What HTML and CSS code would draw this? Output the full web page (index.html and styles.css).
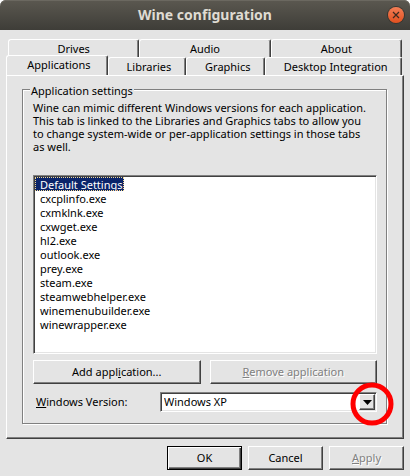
FILE: index.html
```html
<!doctype html>
<html lang="en">
  <head>
    <meta charset="utf-8">
    <title>Wine configuration</title>
    <link rel="stylesheet" href="styles.css">
  </head>
  <body>
    <header class="titlebar">
      <h1>Wine configuration</h1>
      <button class="close" type="button" aria-label="Close">
        <svg viewBox="0 0 16 16" width="16" height="16">
          <path d="M5 5l6 6M11 5l-6 6" stroke="#3c2a20" stroke-width="1.2" fill="none"/>
        </svg>
      </button>
    </header>

    <form class="dialog">
      <div class="tabs" role="tablist">
        <div class="tab-row back">
          <button class="tab" type="button" role="tab">Drives</button>
          <button class="tab" type="button" role="tab">Audio</button>
          <button class="tab" type="button" role="tab">About</button>
        </div>
        <div class="tab-row front">
          <button class="tab active" type="button" role="tab" aria-selected="true">Applications</button>
          <button class="tab libraries" type="button" role="tab">Libraries</button>
          <button class="tab graphics" type="button" role="tab">Graphics</button>
          <button class="tab desktop" type="button" role="tab">Desktop Integration</button>
        </div>
      </div>

      <div class="panel" role="tabpanel">
        <fieldset class="group">
          <legend>Application settings</legend>
          <p>Wine can mimic different Windows versions for each application. This tab is linked to the Libraries and Graphics tabs to allow you to change system-wide or per-application settings in those tabs as&nbsp;well.</p>

          <select class="app-list" size="12" aria-label="Applications">
            <option selected>Default Settings</option>
            <option>cxcplinfo.exe</option>
            <option>cxmklnk.exe</option>
            <option>cxwget.exe</option>
            <option>hl2.exe</option>
            <option>outlook.exe</option>
            <option>prey.exe</option>
            <option>steam.exe</option>
            <option>steamwebhelper.exe</option>
            <option>winemenubuilder.exe</option>
            <option>winewrapper.exe</option>
          </select>

          <div class="app-actions">
            <button class="btn" type="button">Add appl<u>i</u>cation...</button>
            <button class="btn" type="button" disabled><u>R</u>emove application</button>
          </div>

          <div class="version">
            <label for="version"><u>W</u>indows Version:</label>
            <div class="combo">
              <select id="version">
                <option>Windows XP</option>
              </select>
              <span class="arrow">
                <svg viewBox="0 0 9 5" width="9" height="5"><path d="M0 0h9L4.500 5z"/></svg>
              </span>
              <svg class="marker" viewBox="0 0 44 44" width="44" height="44">
                <circle cx="22" cy="22" r="19" fill="none" stroke="#f00" stroke-width="5"/>
              </svg>
            </div>
          </div>
        </fieldset>
      </div>

      <div class="footer">
        <button class="btn default" type="button">OK</button>
        <button class="btn" type="button">Cancel</button>
        <button class="btn" type="button" disabled><u>A</u>pply</button>
      </div>
    </form>
  </body>
</html>
```
FILE: styles.css
```css
* {
  box-sizing: border-box;
}
body {
  margin: 0;
  background: #e4e4e4;
  color: #000;
  font: 11px/14px "Noto Sans", sans-serif;
}
button,
select {
  font: inherit;
  color: inherit;
}
.titlebar {
  position: relative;
  display: flex;
  align-items: center;
  justify-content: center;
  height: 30px;
  border-radius: 6px 6px 0 0;
  background: linear-gradient(#5b5850, #3e3d38);
  box-shadow: inset 0 1px #6b6860;
}
.titlebar::before {
  content: "";
  position: absolute;
  z-index: -1;
  inset: 0;
  background: #fff;
}
.titlebar h1 {
  margin: 0;
  font: bold 14px/20px "Noto Sans", sans-serif;
  color: #dfdbd2;
}
.close {
  position: absolute;
  right: 6px;
  top: 7px;
  width: 16px;
  height: 16px;
  padding: 0;
  border: 0;
  border-radius: 50%;
  background: linear-gradient(#f37e56, #e2501f);
  box-shadow: 0 0 0 1px #38352f;
}
.close svg {
  display: block;
}
.dialog {
  padding: 9px 6px 6px;
}

/* tabs */
.tab-row {
  display: flex;
}
.tab {
  height: 18px;
  padding: 0;
  border: 1px solid #fff;
  border-right-color: #404040;
  border-bottom: 0;
  border-radius: 3px 2px 0 0;
  background: #e4e4e4;
  box-shadow: inset -1px 0 #808080;
}
.back {
  padding: 0 2px;
}
.back .tab {
  flex: 1;
}
.front {
  padding-right: 2px;
  align-items: flex-end;
}
.front .tab {
  padding-left: 4px;
}
.front .active {
  flex: 102;
  height: 20px;
  margin-top: -2px;
  padding-bottom: 2px;
}
.libraries {
  flex: 77;
}
.graphics {
  flex: 78;
}
.desktop {
  flex: 139;
}

.panel {
  padding: 4px 16px 14px 15px;
  border: 1px solid #fff;
  border-right-color: #404040;
  border-bottom-color: #404040;
  background: #e4e4e4;
  box-shadow: inset -1px -1px #808080;
}
.group {
  min-width: 0;
  margin: 0;
  padding: 3px 9px 11px 10px;
  border: 1px solid #808080;
  box-shadow: 1px 1px #fff, inset 1px 1px #fff;
}
.group legend {
  margin-left: -3px;
  padding: 4px 1px 0;
  background: #e4e4e4;
}
.group p {
  margin: 0 0 22px;
  padding-right: 6px;
  line-height: 13px;
}

.app-list {
  display: block;
  width: 100%;
  height: 179px;
  padding: 1px;
  border: 1px solid #808080;
  border-color: #808080 #fff #fff #808080;
  border-radius: 0;
  background: #fff;
  box-shadow: inset 1px 1px #404040, inset -1px -1px #e4e4e4;
  outline: 0;
  overflow: hidden;
}
.app-list option {
  width: fit-content;
  height: 14px;
  min-height: 14px;
  padding: 0 1px 0 5px;
  line-height: 14px;
}
.app-list option:checked {
  background: #0a246a linear-gradient(#0a246a, #0a246a);
  color: #fff;
  outline: 1px dotted #f5db95;
  outline-offset: -1px;
}

.btn {
  height: 24px;
  padding: 0 0 1px;
  border: 1px solid #fff;
  border-right-color: #404040;
  border-bottom-color: #404040;
  border-radius: 0;
  background: #e4e4e4;
  box-shadow: inset -1px -1px #808080;
}
.btn:disabled {
  color: #808080;
  text-shadow: 1px 1px #fff;
}
.default {
  border-color: #000;
  box-shadow: inset 1px 1px #fff, inset -1px -1px #404040, inset -2px -2px #808080;
}
.app-actions {
  display: grid;
  grid-template-columns: 1fr 1fr;
  gap: 9px;
  margin: 6px 0 8px;
}

.version {
  display: grid;
  grid-template-columns: 124px 1fr;
  align-items: center;
  padding-left: 3px;
}
.combo {
  position: relative;
}
.combo select {
  display: block;
  width: 100%;
  height: 20px;
  padding: 0 20px 0 3px;
  border: 1px solid #808080;
  border-color: #808080 #fff #fff #808080;
  border-radius: 0;
  background: #fff;
  box-shadow: inset 1px 1px #404040, inset -1px -1px #e4e4e4;
  appearance: none;
}
.arrow {
  position: absolute;
  top: 2px;
  right: 2px;
  bottom: 2px;
  width: 16px;
  display: flex;
  align-items: center;
  justify-content: center;
  border: 1px solid #fff;
  border-color: #fff #404040 #404040 #fff;
  background: #e4e4e4;
  box-shadow: inset -1px -1px #808080;
  pointer-events: none;
}
.marker {
  position: absolute;
  top: -10px;
  right: -17px;
  pointer-events: none;
}

.footer {
  display: flex;
  justify-content: flex-end;
  gap: 6px;
  margin-top: 7px;
}
.footer .btn {
  width: 75px;
}
```
